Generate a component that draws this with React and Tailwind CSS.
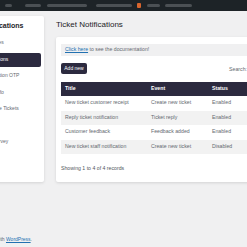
import React from "react";

const menu = [
  "Templates",
  "Notifications",
  "Registration OTP",
  "Ticket Info",
  "Duplicate Tickets",
  "Export",
  "NPS Survey",
];

const rows = [
  ["New ticket customer receipt", "Create new ticket", "Enabled"],
  ["Reply ticket notification", "Ticket reply", "Enabled"],
  ["Customer feedback", "Feedback added", "Enabled"],
  ["New ticket staff notification", "Create new ticket", "Disabled"],
];

const App = () => {
  return (
    <div className="w-[247px] h-[247px] overflow-hidden bg-[#f0f0f1] flex flex-col font-['Liberation_Sans',Arial,sans-serif]">
      {/* Admin bar (blurred in the shot) */}
      <div className="h-[11px] shrink-0 bg-[#1d2327] flex items-center">
        <div className="ml-[5px] w-[7px] h-[3px] rounded-full bg-[#4b5054]" />
        <div className="ml-[13px] w-[16px] h-[3px] rounded-full bg-[#4b5054]" />
        <div className="ml-[6px] w-[40px] h-[3px] rounded-full bg-[#4b5054]" />
        <div className="ml-[9px] w-[36px] h-[3px] rounded-full bg-[#4b5054]" />
        <div className="ml-[5px] w-[4px] h-[5px] rounded-[1px] bg-[#d8652e]" />
        <div className="ml-[6px] w-[13px] h-[3px] rounded-full bg-[#4b5054]" />
        <div className="ml-[5px] w-[27px] h-[3px] rounded-full bg-[#4b5054]" />
      </div>

      <div className="flex items-start mt-[5px]">
        {/* Sidebar */}
        <div className="ml-[-30px] w-[74px] h-[166px] shrink-0 bg-white rounded-[2px] shadow-[0_1px_3px_rgba(0,0,0,0.12)] px-[3px] pt-[6px]">
          <div className="pl-[8px] h-[8px] flex items-center text-[7px] font-bold text-[#1d2327] whitespace-nowrap">
            Notifications
          </div>
          <div className="mt-[6px] flex flex-col gap-[2.5px]">
            {menu.map((m) => (
              <div
                key={m}
                className={
                  m === "Notifications"
                    ? "h-[14px] flex items-center pl-[8px] rounded-[2px] bg-[#2c2a3f] text-white text-[5px] whitespace-nowrap"
                    : "h-[14px] flex items-center pl-[8px] text-[#646970] text-[5px] whitespace-nowrap"
                }
              >
                {m}
              </div>
            ))}
          </div>
        </div>

        {/* Main */}
        <div className="ml-[12px] w-[220px] shrink-0">
          <div className="h-[18px] flex items-center text-[8px] text-[#1d2327] whitespace-nowrap">
            Ticket Notifications
          </div>
          <div className="mt-[3px] bg-white rounded-[2px] shadow-[0_1px_3px_rgba(0,0,0,0.12)] px-[5px] pt-[7px] pb-[9.5px]">
            <div className="h-[12px] flex items-center px-[4px] bg-[#f0f0f1] text-[5.2px] text-[#646970] whitespace-nowrap">
              <span className="text-[#2271b1] underline">Click here</span>
              <span>&nbsp;to see the documentation!</span>
            </div>

            <div className="mt-[7px] flex items-end justify-between">
              <button className="h-[11px] w-[26px] rounded-[2px] bg-[#2c2a3f] text-white text-[5px] flex items-center justify-center">
                Add new
              </button>
              <div className="flex items-center gap-[2px] text-[5.2px] text-[#646970]">
                <span>Search:</span>
                <div className="w-[22px] h-[8px] border border-[#ccc] rounded-[1px]" />
              </div>
            </div>

            <div className="mt-[8px]">
              <div className="h-[14px] grid grid-cols-[86px_61px_1fr] items-center pl-[4px] bg-[#2c2a3f] text-white font-bold text-[5.2px]">
                <span>Title</span>
                <span>Event</span>
                <span>Status</span>
              </div>
              {rows.map((r, i) => (
                <div
                  key={r[0]}
                  className={
                    i % 2 === 1
                      ? "h-[14.5px] grid grid-cols-[86px_61px_1fr] items-center pl-[4px] bg-[#f2f2f2] text-[#646970] text-[5.2px] whitespace-nowrap"
                      : "h-[14.5px] grid grid-cols-[86px_61px_1fr] items-center pl-[4px] bg-white text-[#646970] text-[5.2px] whitespace-nowrap"
                  }
                >
                  <span>{r[0]}</span>
                  <span>{r[1]}</span>
                  <span>{r[2]}</span>
                </div>
              ))}
            </div>

            <div className="mt-[11.5px] h-[7px] flex items-center text-[5.2px] text-[#50575e] whitespace-nowrap">
              Showing 1 to 4 of 4 records
            </div>
          </div>
        </div>
      </div>

      {/* Footer */}
      <div className="mt-[54px] ml-[-88px] w-[120px] h-[7px] flex items-center justify-end text-[5px] text-[#646970] whitespace-nowrap">
        <span>Thank you for creating with&nbsp;</span>
        <span className="text-[#2271b1] underline">WordPress</span>
        <span>.</span>
      </div>
    </div>
  );
};

export default App;
